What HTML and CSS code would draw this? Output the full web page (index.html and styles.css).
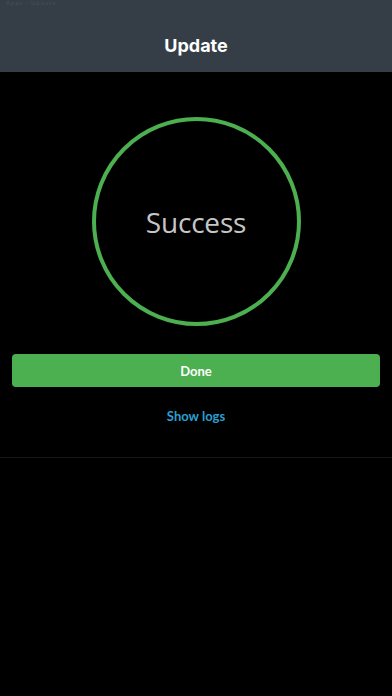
FILE: index.html
```html
<!DOCTYPE html>
<html>
<head>
<meta charset="utf-8">
<link rel="stylesheet" href="styles.css">
</head>
<body>
<header class="header">
  <div class="status">Apps · Update</div>
  <h1 class="title">Update</h1>
</header>
<main class="content">
  <div class="ring"><span class="ring-text">Success</span></div>
  <button class="done">Done</button>
  <a class="logs">Show logs</a>
</main>
<div class="divider"></div>
</body>
</html>
```
FILE: styles.css
```css
html, body {
  margin: 0;
  padding: 0;
  background: #000;
  width: 392px;
  height: 696px;
  overflow: hidden;
  font-family: "Lato", "Open Sans", sans-serif;
}
.header {
  height: 72px;
  background: #353e47;
  display: flex;
  flex-direction: column;
  align-items: center;
  position: relative;
}
.status {
  position: absolute;
  top: 0;
  left: 6px;
  font-size: 6px;
  line-height: 6px;
  color: #454d56;
  letter-spacing: 1px;
}
.title {
  margin: 36px 0 0;
  font-size: 18px;
  line-height: 20px;
  font-weight: 700;
  color: #fff;
  font-family: "Inter", "Liberation Sans", sans-serif;
}
.content {
  display: flex;
  flex-direction: column;
  align-items: center;
  padding: 45px 12px 0;
}
.ring {
  width: 201px;
  height: 201px;
  border: 4px solid #4caf50;
  border-radius: 50%;
  display: flex;
  align-items: center;
  justify-content: center;
}
.ring-text {
  font-family: "Open Sans", sans-serif;
  font-size: 28px;
  color: #c6c6c6;
  margin-top: 0;
  letter-spacing: -0.2px;
}
.done {
  margin-top: 28px;
  width: 100%;
  height: 33px;
  border: 0;
  border-radius: 4px;
  background: #4caf50;
  color: #fff;
  font-family: "Lato", sans-serif;
  font-weight: 700;
  font-size: 13px;
}
.logs {
  margin-top: 20px;
  color: #2a9fcf;
  font-weight: 700;
  font-size: 13px;
  line-height: 18px;
}
.divider {
  margin-top: 32px;
  height: 1px;
  background: #151515;
}
```
